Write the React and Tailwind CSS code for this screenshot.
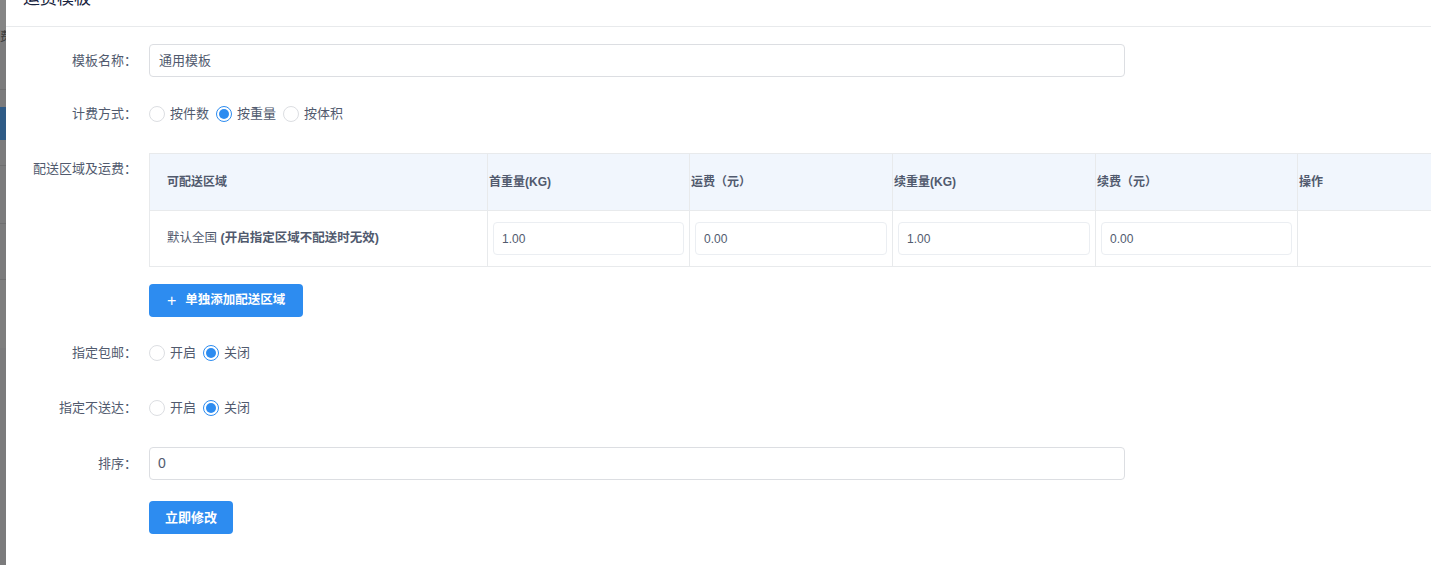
import React from 'react';

const Radio = ({ checked, label }) => (
    <div className="flex items-center">
        <span className={`w-4 h-4 rounded-full border bg-white flex items-center justify-center ${checked ? 'border-[#2d8cf0]' : 'border-[#dcdee2]'}`}>
            {checked && <span className="w-[10px] h-[10px] rounded-full bg-[#2d8cf0]" />}
        </span>
        <span className="ml-[5px] mr-[7px] text-[13px] text-[#515a6e]">{label}</span>
    </div>
);

const Label = ({ children }) => (
    <div className="w-[143px] shrink-0 pr-[12px] text-right text-[13px] text-[#515a6e] leading-[32px]">{children}</div>
);

const cols = ['可配送区域', '首重量(KG)', '运费（元）', '续重量(KG)', '续费（元）', '操作'];
const values = ['1.00', '0.00', '1.00', '0.00'];

const App = () => {
    return (
        <div className="w-[1431px] h-[565px] overflow-hidden flex bg-white font-['Liberation_Sans','Noto_Sans_CJK_SC',sans-serif]">
            {/* page behind the modal */}
            <div className="w-[6px] shrink-0 h-full bg-[#7b7b7c] flex flex-col">
                <div className="h-[30px] bg-[#858585]" />
                <div className="h-[60px] border-b border-[#6f6f70] text-[12px] text-[#3d3d3d] leading-[14px] overflow-hidden">费</div>
                <div className="h-[17px]" />
                <div className="h-[33px] bg-[#2f5b86]" />
                <div className="h-[26px] border-b border-[#6f6f70]" />
                <div className="h-[58px] border-b border-[#6f6f70]" />
                <div className="h-[56px] border-b border-[#6f6f70]" />
                <div className="h-[68px] bg-[#7e7e7e]" />
                <div className="flex-1" />
            </div>

            <div className="flex-1 min-w-0 overflow-hidden">
                {/* Header */}
                <div className="h-[27px] border-b border-[#e8eaec] flex items-end pb-[18px] pl-[17px]">
                    <span className="text-[17px] leading-[18px] text-[#17233d]">运费模板</span>
                </div>

                {/* Form */}
                <div className="pt-[17px]">
                    <div className="flex items-center">
                        <Label>模板名称：</Label>
                        <div className="w-[976px] h-[33px] border border-[#dcdee2] rounded-[4px] px-[9px] flex items-center text-[13px] text-[#515a6e]">通用模板</div>
                    </div>

                    <div className="flex items-center mt-[21px]">
                        <Label>计费方式：</Label>
                        <div className="flex items-center">
                            <Radio label="按件数" />
                            <Radio checked label="按重量" />
                            <Radio label="按体积" />
                        </div>
                    </div>

                    <div className="flex mt-[23px]">
                        <Label>配送区域及运费：</Label>
                        <div>
                            <div className="w-[1400px] border border-[#e8eaec] text-[12px] text-[#515a6e]">
                                <div className="grid grid-cols-[338px_202px_203px_203px_202px_252px] h-[57px] bg-[#f1f6fd] border-b border-[#e8eaec]">
                                    {cols.map((c, i) => (
                                        <div key={c} className={`flex items-center font-bold ${i === 0 ? 'pl-[17px]' : 'pl-[1px]'} ${i < cols.length - 1 ? 'border-r border-[#e8eaec]' : ''}`}>{c}</div>
                                    ))}
                                </div>
                                <div className="grid grid-cols-[338px_202px_203px_203px_202px_252px] h-[55px]">
                                    <div className="flex items-center pl-[17px] border-r border-[#e8eaec] text-[12.5px]">
                                        默认全国&nbsp;<span className="font-bold">(开启指定区域不配送时无效)</span>
                                    </div>
                                    {values.map((v, i) => (
                                        <div key={i} className="flex items-center px-[5px] border-r border-[#e8eaec]">
                                            <div className="w-full h-[33px] border border-[#ebeef2] rounded-[4px] pl-[8px] flex items-center text-[12px] text-[#515a6e]">{v}</div>
                                        </div>
                                    ))}
                                    <div />
                                </div>
                            </div>
                            <button className="mt-[17px] h-[33px] px-[18px] rounded-[4px] bg-[#2d8cf0] text-white text-[12.5px] font-bold flex items-center">
                                <span className="text-[16px] font-normal mr-[9px] leading-none">+</span>单独添加配送区域
                            </button>
                        </div>
                    </div>

                    <div className="flex items-center mt-[20px]">
                        <Label>指定包邮：</Label>
                        <div className="flex items-center">
                            <Radio label="开启" />
                            <Radio checked label="关闭" />
                        </div>
                    </div>

                    <div className="flex items-center mt-[23px]">
                        <Label>指定不送达：</Label>
                        <div className="flex items-center">
                            <Radio label="开启" />
                            <Radio checked label="关闭" />
                        </div>
                    </div>

                    <div className="flex items-center mt-[23px]">
                        <Label>排序：</Label>
                        <div className="w-[976px] h-[33px] border border-[#dcdee2] rounded-[4px] px-[8px] flex items-center text-[14px] text-[#515a6e]">0</div>
                    </div>

                    <div className="flex mt-[21px]">
                        <div className="w-[143px] shrink-0" />
                        <button className="h-[33px] w-[84px] rounded-[4px] bg-[#2d8cf0] text-white text-[13px] font-bold flex items-center justify-center">立即修改</button>
                    </div>
                </div>
            </div>
        </div>
    );
};

export default App;
